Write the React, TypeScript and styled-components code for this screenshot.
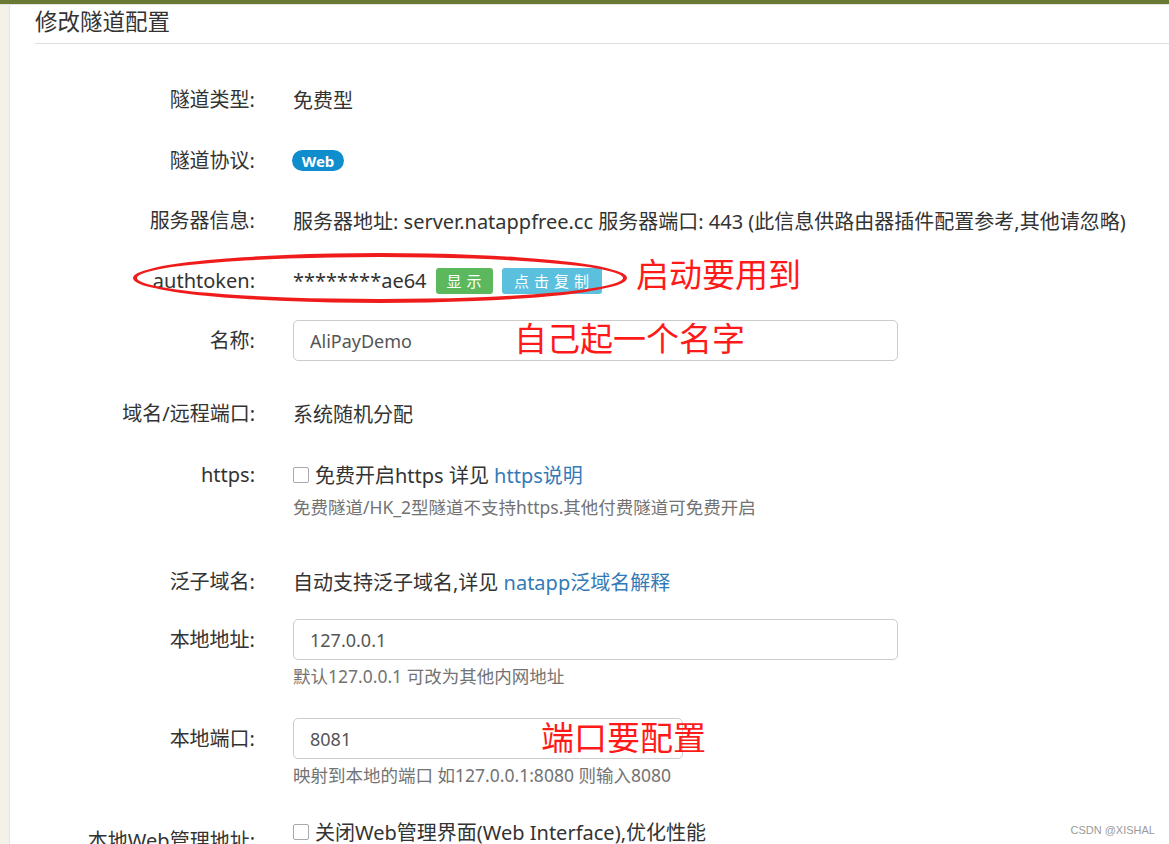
import React from 'react';
import styled, { createGlobalStyle } from 'styled-components';

const GlobalStyle = createGlobalStyle`
    html, body {
        margin: 0;
        padding: 0;
        background: #ffffff;
        overflow: hidden;
    }
    body {
        font-family: "Noto Sans", "Noto Sans CJK SC", sans-serif;
        color: #333333;
    }
`;

const App = () => {
    return (
        <>
            <GlobalStyle />
            <Page>
                <TopBar />
                <Body>
                    <LeftStrip />
                    <Main>
                        <Title>修改隧道配置</Title>
                        <Form>
                            <Row $mt={35}>
                                <Label>隧道类型:</Label>
                                <Value>
                                    <Line>免费型</Line>
                                </Value>
                            </Row>
                            <Row $mt={20}>
                                <Label>隧道协议:</Label>
                                <Value>
                                    <Line><Badge>Web</Badge></Line>
                                </Value>
                            </Row>
                            <Row $mt={19}>
                                <Label>服务器信息:</Label>
                                <Value>
                                    <Line>服务器地址: server.natappfree.cc 服务器端口: 443 (此信息供路由器插件配置参考,其他请忽略)</Line>
                                </Value>
                            </Row>
                            <Row $mt={19}>
                                <Label>authtoken:</Label>
                                <Value>
                                    <Line>
                                        ********ae64
                                        <Btn $bg="#5cb85c" $w={57}>显示</Btn>
                                        <Btn $bg="#5bc0de" $w={100}>点击复制</Btn>
                                    </Line>
                                </Value>
                                <Ellipse />
                                <Note $left={601} $top={-5}>启动要用到</Note>
                            </Row>
                            <Row $mt={19}>
                                <Label>名称:</Label>
                                <Value>
                                    <Input $w={605} defaultValue="AliPayDemo" />
                                </Value>
                                <Note $left={479} $top={-1}>自己起一个名字</Note>
                            </Row>
                            <Row $mt={32}>
                                <Label>域名/远程端口:</Label>
                                <Value>
                                    <Line>系统随机分配</Line>
                                </Value>
                            </Row>
                            <Row $mt={20}>
                                <Label>https:</Label>
                                <Value>
                                    <Line>
                                        <Check />免费开启https 详见 <Link>https说明</Link>
                                    </Line>
                                    <Help $mt={0}>免费隧道/HK_2型隧道不支持https.其他付费隧道可免费开启</Help>
                                </Value>
                            </Row>
                            <Row $mt={42}>
                                <Label>泛子域名:</Label>
                                <Value>
                                    <Line>自动支持泛子域名,详见 <Link>natapp泛域名解释</Link></Line>
                                </Value>
                            </Row>
                            <Row $mt={17}>
                                <Label>本地地址:</Label>
                                <Value>
                                    <Input $w={605} defaultValue="127.0.0.1" />
                                    <Help $mt={4}>默认127.0.0.1 可改为其他内网地址</Help>
                                </Value>
                            </Row>
                            <Row $mt={30}>
                                <Label>本地端口:</Label>
                                <Value>
                                    <Input $w={390} defaultValue="8081" />
                                    <Help $mt={4}>映射到本地的端口 如127.0.0.1:8080 则输入8080</Help>
                                </Value>
                                <Note $left={506} $top={0}>端口要配置</Note>
                            </Row>
                            <Row $mt={24}>
                                <Label $pt={9}>本地Web管理地址:</Label>
                                <Value>
                                    <Line><Check />关闭Web管理界面(Web Interface),优化性能</Line>
                                </Value>
                            </Row>
                        </Form>
                    </Main>
                </Body>
                <Watermark>CSDN @XISHAL</Watermark>
            </Page>
        </>
    );
}

export default App;

const Page = styled.div`
    position: relative;
    width: 1169px;
    height: 844px;
    overflow: hidden;
    display: flex;
    flex-direction: column;
`;

const TopBar = styled.div`
    height: 4px;
    background: #6a7a34;
    border-bottom: 1px solid #e2e2e2;
    flex-shrink: 0;
`;

const Body = styled.div`
    display: flex;
    flex: 1;
`;

const LeftStrip = styled.div`
    width: 9px;
    background: #f4f1ea;
    border-right: 1px solid #e4e4e4;
    flex-shrink: 0;
`;

const Main = styled.div`
    flex: 1;
    padding-left: 25px;
`;

const Title = styled.h1`
    margin: 0;
    padding: 1px 0 5px;
    font-size: 22.5px;
    font-weight: normal;
    line-height: 32px;
    color: #333333;
    border-bottom: 1px solid #dddddd;
`;

const Form = styled.div`
    display: flex;
    flex-direction: column;
`;

interface RowProps {
    $mt: number;
}
const Row = styled.div<RowProps>`
    position: relative;
    display: flex;
    gap: 38px;
    margin-top: ${props => props.$mt}px;
    font-size: 20px;
`;

interface LabelProps {
    $pt?: number;
}
const Label = styled.div<LabelProps>`
    width: 220px;
    flex-shrink: 0;
    padding-top: ${props => props.$pt || 0}px;
    text-align: right;
    line-height: 41px;
    white-space: nowrap;
`;

const Value = styled.div`
    display: flex;
    flex-direction: column;
    align-items: flex-start;
`;

const Line = styled.div`
    display: flex;
    align-items: center;
    height: 41px;
    white-space: pre;
`;

const Badge = styled.span`
    display: inline-flex;
    align-items: center;
    justify-content: center;
    width: 52px;
    height: 21px;
    margin-left: -1px;
    border-radius: 11px;
    background: #0f8dcc;
    color: #ffffff;
    font-size: 15px;
    font-weight: bold;
`;

interface BtnProps {
    $bg: string;
    $w: number;
}
const Btn = styled.span<BtnProps>`
    display: inline-flex;
    align-items: center;
    justify-content: center;
    width: ${props => props.$w}px;
    height: 26px;
    margin-left: 9px;
    border-radius: 3px;
    background: ${props => props.$bg};
    color: #ffffff;
    font-size: 15px;
    letter-spacing: 5px;
    text-indent: 5px;
`;

interface InputProps {
    $w: number;
}
const Input = styled.input<InputProps>`
    box-sizing: border-box;
    width: ${props => props.$w}px;
    height: 41px;
    padding: 0 16px;
    border: 1px solid #cccccc;
    border-radius: 5px;
    font-family: inherit;
    font-size: 18px;
    color: #555555;
    outline: none;
    background: #ffffff;
`;

interface HelpProps {
    $mt: number;
}
const Help = styled.div<HelpProps>`
    margin-top: ${props => props.$mt}px;
    font-size: 17.5px;
    line-height: 24px;
    color: #737373;
    white-space: nowrap;
`;

const Link = styled.span`
    color: #337ab7;
`;

const Check = styled.span`
    box-sizing: border-box;
    display: inline-block;
    width: 16px;
    height: 16px;
    margin-right: 6px;
    border: 1.5px solid #a9a9b0;
    border-radius: 2px;
    background: #ffffff;
`;

const Ellipse = styled.div`
    position: absolute;
    left: 98px;
    top: -7px;
    width: 494px;
    height: 50px;
    box-sizing: border-box;
    border: 4px solid #f01c1c;
    border-radius: 50%;
    pointer-events: none;
`;

interface NoteProps {
    $left: number;
    $top: number;
}
const Note = styled.div<NoteProps>`
    position: absolute;
    left: ${props => props.$left}px;
    top: ${props => props.$top}px;
    font-size: 33px;
    line-height: 40px;
    color: #ff1a1a;
    white-space: nowrap;
    pointer-events: none;
`;

const Watermark = styled.div`
    position: absolute;
    right: 14px;
    bottom: 8px;
    font-family: "Liberation Sans", sans-serif;
    font-size: 11px;
    color: #9a9a9a;
`;
